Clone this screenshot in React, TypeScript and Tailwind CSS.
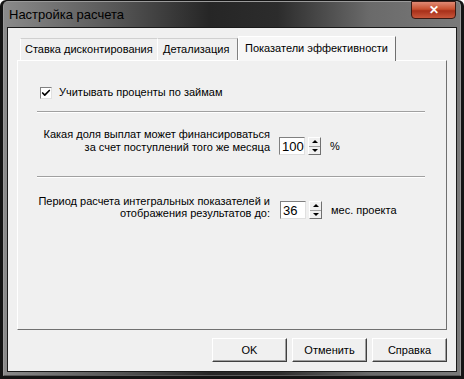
import { Check } from "lucide-react";

const font = { fontFamily: '"Liberation Sans", Arial, sans-serif' };

function Spin({ value }: { value: string }) {
  return (
    <div className="flex items-center gap-[3px]">
      <div className="w-[26px] h-[18px] bg-white border border-t-[#808080] border-l-[#808080] border-b-[#e0e0e0] border-r-[#e0e0e0] flex items-center pl-[2px] text-[13px] leading-none text-black">
        {value}
      </div>
      <div className="flex flex-col w-[13px] h-[18px] border border-t-white border-l-white border-r-[#707070] border-b-[#707070] bg-[#f0f0f0]">
        <div className="flex-1 flex items-center justify-center border-b border-[#a0a0a0]">
          <div className="w-0 h-0 border-l-[3px] border-r-[3px] border-b-[3px] border-l-transparent border-r-transparent border-b-black" />
        </div>
        <div className="flex-1 flex items-center justify-center">
          <div className="w-0 h-0 border-l-[3px] border-r-[3px] border-t-[3px] border-l-transparent border-r-transparent border-t-black" />
        </div>
      </div>
    </div>
  );
}

function Btn({ label }: { label: string }) {
  return (
    <button
      type="button"
      className="w-[75px] h-[24px] bg-[#f0f0f0] border border-t-white border-l-white border-r-[#404040] border-b-[#404040] shadow-[inset_-1px_-1px_0_#a0a0a0] text-[11px] text-black"
    >
      {label}
    </button>
  );
}

export default function App() {
  return (
    <div
      style={font}
      className="w-[464px] h-[379px] bg-[#141414] rounded-t-[6px] flex flex-col px-[3px] pb-[3px] pt-[1px] overflow-hidden"
    >
      <div className="flex flex-col flex-1 border-t border-x border-[#9a9a9a] rounded-t-[5px] bg-[linear-gradient(90deg,#8a8a8a_0%,#555_25%,#262626_45%,#2c2c2c_60%,#6a6a6a_80%,#7a7a7a_100%)] px-[3px] pb-[3px] border-b border-b-[#5a5a5a]">
        {/* Title bar */}
        <div className="relative h-[25px] flex items-center pl-[2px]">
          <span className="text-[13px] text-black">Настройка расчета</span>
          <div className="absolute right-[1px] top-[-1px] w-[45px] h-[18px] rounded-b-[4px] border border-[#3a1a14] bg-[linear-gradient(180deg,#e08a74_0%,#c8502f_45%,#a8301a_55%,#c8563a_100%)] flex items-center justify-center">
            <span className="text-white text-[12px] font-bold leading-none">✕</span>
          </div>
        </div>

        {/* Client area */}
        <div className="flex-1 bg-[#f0f0f0] border border-[#1a1a1a] flex flex-col px-[9px] pt-[8px]">
          {/* Tabs */}
          <div className="flex items-end h-[24px] pl-[3px] text-[11px] text-black">
            <div className="h-[22px] w-[137px] pl-[4px] flex items-center border-t border-l border-t-[#d0d0d0] border-l-white bg-[#f0f0f0]">
              Ставка дисконтирования
            </div>
            <div className="h-[22px] w-[81px] pl-[5px] flex items-center border-t border-l border-r border-t-[#d0d0d0] border-l-white border-r-[#808080] bg-[#f0f0f0]">
              Детализация
            </div>
            <div className="h-[25px] w-[158px] -mb-[1px] pl-[6px] pb-[2px] flex items-center border-t border-l border-r border-t-white border-l-white border-r-[#707070] bg-[#f7f7f7] relative z-10">
              Показатели эффективности
            </div>
          </div>

          {/* Panel */}
          <div className="h-[270px] border border-t-white border-l-white border-r-[#707070] border-b-[#707070] bg-[#f0f0f0] flex flex-col px-[19px] text-[11px] text-black">
            <div className="flex items-center gap-[7px] mt-[25px] ml-[3px] h-[13px]">
              <div className="w-[12px] h-[12px] bg-white border border-t-[#808080] border-l-[#808080] border-b-[#e0e0e0] border-r-[#e0e0e0] flex items-center justify-center">
                <Check size={10} strokeWidth={4} className="text-black" />
              </div>
              <span>Учитывать проценты по займам</span>
            </div>

            <div className="mt-[12px] h-[2px] border-t border-[#a0a0a0] border-b border-b-white w-[388px]" />

            <div className="flex items-start mt-[15px]">
              <div className="w-[233px] text-right leading-[13px] whitespace-nowrap">
                Какая доля выплат может финансироваться
                <br />
                за счет поступлений того же месяца
              </div>
              <div className="ml-[9px] mt-[9px] flex items-center">
                <Spin value="100" />
                <span className="ml-[9px]">%</span>
              </div>
            </div>

            <div className="mt-[21px] h-[2px] border-t border-[#a0a0a0] border-b border-b-white w-[388px]" />

            <div className="flex items-start mt-[17px]">
              <div className="w-[233px] text-right leading-[12px] whitespace-nowrap">
                Период расчета интегральных показателей и
                <br />
                отображения результатов до:
              </div>
              <div className="ml-[10px] mt-[6px] flex items-center">
                <Spin value="36" />
                <span className="ml-[9px]">мес. проекта</span>
              </div>
            </div>
          </div>

          {/* Buttons */}
          <div className="flex justify-end gap-[5px] mt-[8px]">
            <Btn label="OK" />
            <Btn label="Отменить" />
            <Btn label="Справка" />
          </div>
        </div>
      </div>
    </div>
  );
}
